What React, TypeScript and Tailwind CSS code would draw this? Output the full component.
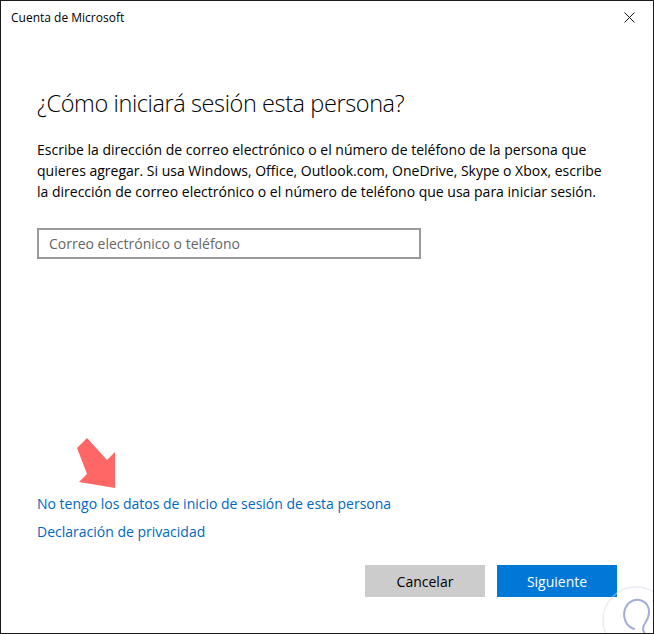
import React from "react";

function Watermark() {
  return (
    <svg width="70" height="70" viewBox="0 0 70 70" className="absolute right-[-18px] bottom-[-22px] opacity-50">
      <circle cx="35" cy="35" r="33" fill="none" stroke="#d7dbee" strokeWidth="1.5" />
      <path
        d="M33 44 C22 40 20 26 28 18 C36 11 48 16 48 27 C48 36 42 38 42 44 C42 48 46 49 44 52 C42 55 36 53 38 56 C40 59 46 58 48 57"
        fill="none"
        stroke="#4a5fb5"
        strokeWidth="2"
        strokeLinecap="round"
      />
    </svg>
  );
}

export default function App() {
  return (
    <div
      className="relative w-[654px] h-[634px] bg-white border border-[#1a1a1a] overflow-hidden flex flex-col text-[#000]"
      style={{ fontFamily: '"Open Sans", "Noto Sans", sans-serif' }}
    >
      {/* Title bar */}
      <div className="h-[33px] flex items-center justify-between pl-[10px] pr-[18px] text-[12px]">
        <span>Cuenta de Microsoft</span>
        <svg width="11" height="11" viewBox="0 0 11 11">
          <path d="M0.5 0.5 L10.5 10.5 M10.5 0.5 L0.5 10.5" stroke="#111" strokeWidth="1" />
        </svg>
      </div>

      {/* Content */}
      <div className="flex-1 flex flex-col px-[36px]">
        <h1 className="mt-[54px] text-[23.5px] font-light leading-[30px] tracking-[-0.4px]">
          ¿Cómo iniciará sesión esta persona?
        </h1>
        <p className="mt-[21px] text-[14px] leading-[21px] w-[570px]">
          Escribe la dirección de correo electrónico o el número de teléfono de la persona que
          quieres agregar. Si usa Windows, Office, Outlook.com, OneDrive, Skype o Xbox, escribe
          la dirección de correo electrónico o el número de teléfono que usa para iniciar sesión.
        </p>
        <div className="mt-[26px] w-[384px] h-[31px] border-2 border-[#999999] flex items-center px-[10px] text-[14px] text-[#666666]">
          Correo electrónico o teléfono
        </div>

        <div className="flex-1" />

        <svg width="48" height="56" viewBox="0 0 48 56" className="ml-[36px]">
          <polygon points="4,10 14,0 34,22 42,14 42,50 6,44 14,36" fill="#ff6666" />
        </svg>
        <a className="text-[14px] text-[#0067c0] leading-[20px]">
          No tengo los datos de inicio de sesión de esta persona
        </a>
        <a className="mt-[8px] text-[14px] text-[#0067c0] leading-[20px]">
          Declaración de privacidad
        </a>

        <div className="mt-[23px] mb-[36px] flex justify-end gap-[12px]">
          <button className="w-[120px] h-[32px] bg-[#cccccc] text-[14px] text-black">Cancelar</button>
          <button className="w-[120px] h-[32px] bg-[#0078d7] text-[14px] text-white">Siguiente</button>
        </div>
      </div>
      <Watermark />
    </div>
  );
}
